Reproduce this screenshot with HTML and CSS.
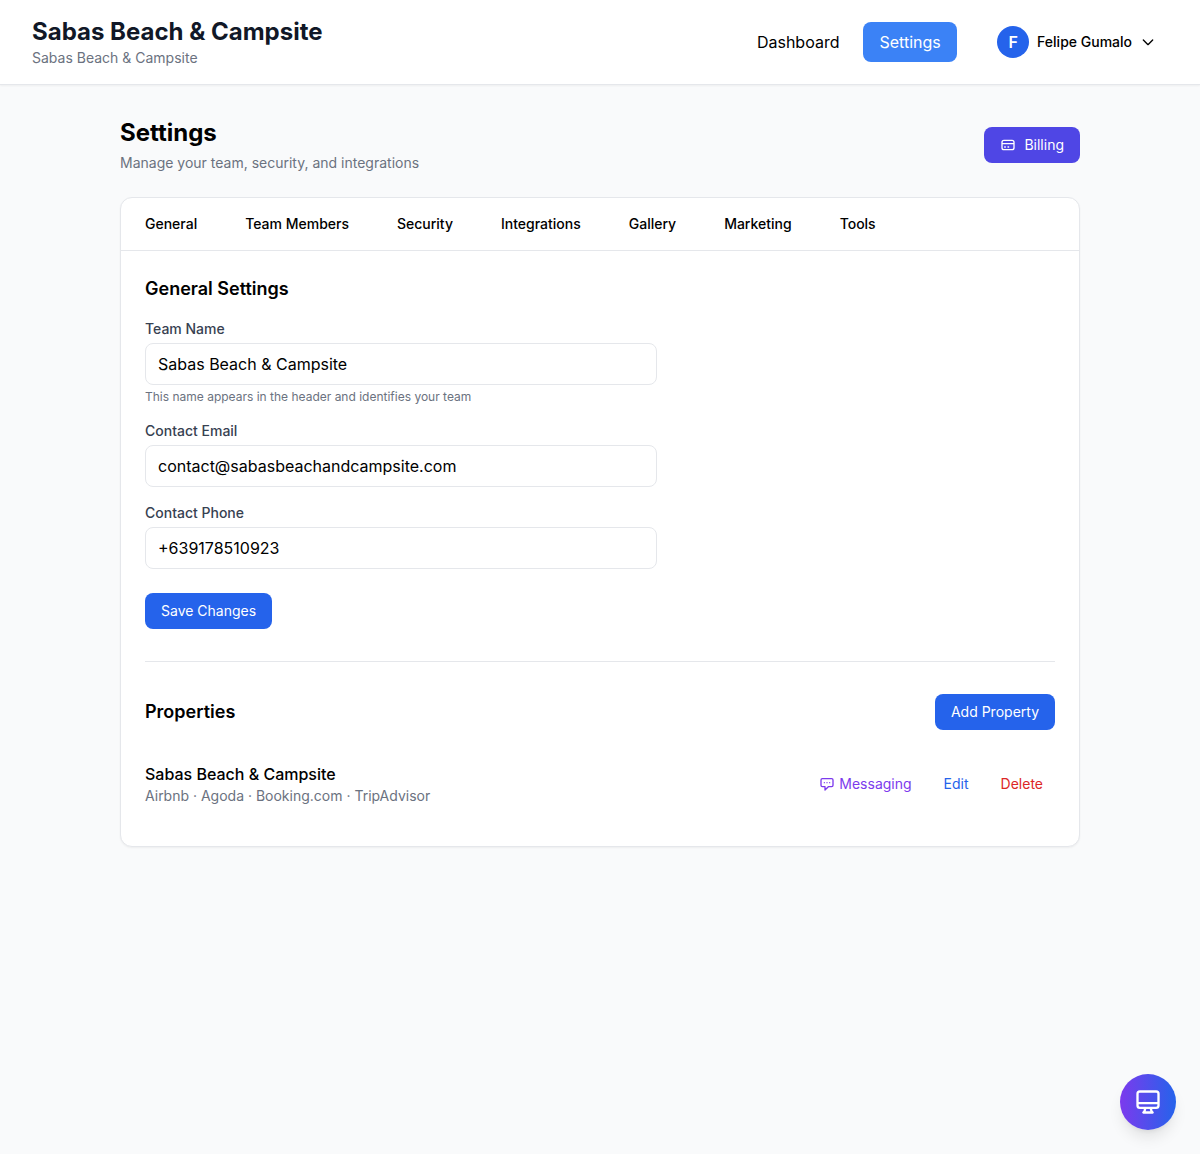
FILE: index.html
```html
<!DOCTYPE html>
<html lang="en">
<head>
    <meta charset="UTF-8">
    <meta name="viewport" content="width=device-width, initial-scale=1.0">
    <title>Settings - Sabas Beach &amp; Campsite</title>
    <link rel="stylesheet" href="styles.css">
</head>
<body>
    <header class="header">
        <div class="brand">
            <h1 class="brand-name">Sabas Beach &amp; Campsite</h1>
            <p class="subtext">Sabas Beach &amp; Campsite</p>
        </div>

        <nav class="nav">
            <a href="#" class="nav-link">Dashboard</a>
            <a href="#" class="nav-link active">Settings</a>
            <button type="button" class="user-menu">
                <span class="avatar">F</span>
                <span>Felipe Gumalo</span>
                <svg class="icon" viewBox="0 0 24 24"><path d="M19 9l-7 7-7-7"/></svg>
            </button>
        </nav>
    </header>

    <main class="container">
        <div class="page-head">
            <div>
                <h2 class="page-title">Settings</h2>
                <p class="subtext">Manage your team, security, and integrations</p>
            </div>
            <button type="button" class="btn btn-billing">
                <svg class="icon" viewBox="0 0 24 24"><path d="M3 10h18M7 15h1m4 0h1m-7 4h12a3 3 0 003-3V8a3 3 0 00-3-3H6a3 3 0 00-3 3v8a3 3 0 003 3z"/></svg>
                Billing
            </button>
        </div>

        <div class="card">
            <div class="tabs">
                <a href="#" class="tab">General</a>
                <a href="#" class="tab">Team Members</a>
                <a href="#" class="tab">Security</a>
                <a href="#" class="tab">Integrations</a>
                <a href="#" class="tab">Gallery</a>
                <a href="#" class="tab">Marketing</a>
                <a href="#" class="tab">Tools</a>
            </div>

            <div class="card-body">
                <h3 class="section-title">General Settings</h3>

                <form class="settings-form">
                    <div class="form-group">
                        <label for="teamName">Team Name</label>
                        <input type="text" id="teamName" value="Sabas Beach &amp; Campsite">
                        <p class="hint">This name appears in the header and identifies your team</p>
                    </div>

                    <div class="form-group">
                        <label for="contactEmail">Contact Email</label>
                        <input type="email" id="contactEmail" value="contact@sabasbeachandcampsite.com">
                    </div>

                    <div class="form-group">
                        <label for="contactPhone">Contact Phone</label>
                        <input type="tel" id="contactPhone" value="+639178510923">
                    </div>

                    <button type="button" class="btn btn-save">Save Changes</button>
                </form>

                <section class="properties">
                    <div class="properties-head">
                        <h3 class="section-title">Properties</h3>
                        <button type="button" class="btn">Add Property</button>
                    </div>

                    <div class="property">
                        <div>
                            <p class="property-name">Sabas Beach &amp; Campsite</p>
                            <p class="subtext">Airbnb · Agoda · Booking.com · TripAdvisor</p>
                        </div>
                        <div class="property-actions">
                            <button type="button" class="action messaging">
                                <svg class="icon" viewBox="0 0 24 24"><path d="M8 10h.01M12 10h.01M16 10h.01M9 16H5a2 2 0 01-2-2V6a2 2 0 012-2h14a2 2 0 012 2v8a2 2 0 01-2 2h-5l-5 5v-5z"/></svg>
                                Messaging
                            </button>
                            <button type="button" class="action edit">Edit</button>
                            <button type="button" class="action delete">Delete</button>
                        </div>
                    </div>
                </section>
            </div>
        </div>
    </main>

    <button type="button" class="fab" aria-label="Open display">
        <svg class="icon" viewBox="0 0 24 24"><path d="M9.75 17L9 20l-1 1h8l-1-1-.75-3M3 13h18M5 17h14a2 2 0 002-2V5a2 2 0 00-2-2H5a2 2 0 00-2 2v10a2 2 0 002 2z"/></svg>
    </button>
</body>
</html>
```
FILE: styles.css
```css
* {
    box-sizing: border-box;
    margin: 0;
    padding: 0;
}
body {
    font-family: Inter, -apple-system, BlinkMacSystemFont, 'Segoe UI', sans-serif;
    font-size: 16px;
    line-height: 24px;
    background: #f9fafb;
    color: #000;
    min-height: 100vh;
    -webkit-font-smoothing: antialiased;
}
a {
    color: inherit;
    text-decoration: none;
}
button {
    font: inherit;
    color: inherit;
    background: none;
    border: none;
    cursor: pointer;
}
.icon {
    width: 16px;
    height: 16px;
    flex-shrink: 0;
    fill: none;
    stroke: currentColor;
    stroke-width: 2;
    stroke-linecap: round;
    stroke-linejoin: round;
}
.subtext {
    font-size: 14px;
    line-height: 20px;
    color: #6b7280;
}

/* Header */
.header {
    display: flex;
    align-items: center;
    justify-content: space-between;
    padding: 16px 32px;
    background: white;
    border-bottom: 1px solid #e5e7eb;
    box-shadow: 0 1px 2px rgba(0,0,0,0.05);
}
.brand-name {
    font-size: 24px;
    line-height: 32px;
    font-weight: 700;
    color: #111827;
}
.nav {
    display: flex;
    align-items: center;
    gap: 8px;
}
.nav-link {
    padding: 8px 16px;
    border-radius: 8px;
}
.nav-link.active {
    background: #3b82f6;
    color: white;
}
.user-menu {
    display: flex;
    align-items: center;
    gap: 8px;
    margin-left: 20.4px;
    padding: 8px 12px;
    font-size: 14px;
    line-height: 20px;
    font-weight: 500;
}
.avatar {
    display: flex;
    align-items: center;
    justify-content: center;
    width: 32px;
    height: 32px;
    border-radius: 50%;
    background: #2563eb;
    color: white;
    font-size: 16px;
    font-weight: 600;
}

/* Page */
.container {
    max-width: 1024px;
    margin: 0 auto;
    padding: 32px;
}
.page-head {
    display: flex;
    align-items: center;
    justify-content: space-between;
    margin-bottom: 24px;
}
.page-title {
    font-size: 24px;
    line-height: 32px;
    font-weight: 700;
    margin-bottom: 4px;
}
.btn {
    padding: 8px 16px;
    background: #2563eb;
    color: white;
    border-radius: 8px;
    font-size: 14px;
    line-height: 20px;
}
.btn:hover {
    background: #1d4ed8;
}
.btn-billing {
    display: flex;
    align-items: center;
    gap: 8px;
    background: #4f46e5;
}
.btn-billing:hover {
    background: #4338ca;
}
.card {
    background: white;
    border: 1px solid #e5e7eb;
    border-radius: 12px;
    box-shadow: 0 1px 2px rgba(0,0,0,0.05);
}
.tabs {
    display: flex;
    gap: 48px;
    padding: 16px 24px;
    border-bottom: 1px solid #e5e7eb;
}
.tab {
    font-size: 14px;
    line-height: 20px;
    font-weight: 500;
}
.card-body {
    padding: 24px;
}
.section-title {
    font-size: 18px;
    line-height: 28px;
    font-weight: 600;
}

/* Form */
.settings-form {
    max-width: 512px;
    margin-top: 16px;
}
.form-group {
    margin-bottom: 16px;
}
label {
    display: block;
    margin-bottom: 4px;
    font-size: 14px;
    line-height: 20px;
    font-weight: 500;
    color: #374151;
}
input {
    display: block;
    width: 100%;
    height: 42px;
    padding: 8px 12px;
    border: 1px solid #e5e7eb;
    border-radius: 8px;
    background: white;
    color: #000;
    font: inherit;
}
input:focus {
    outline: none;
    border-color: #3b82f6;
}
.hint {
    margin-top: 4px;
    font-size: 12px;
    line-height: 16px;
    color: #6b7280;
}
.btn-save {
    display: block;
    margin-top: 24px;
}

/* Properties */
.properties {
    margin-top: 32px;
    padding-top: 32px;
    border-top: 1px solid #e5e7eb;
}
.properties-head {
    display: flex;
    align-items: center;
    justify-content: space-between;
    margin-bottom: 16px;
}
.property {
    display: flex;
    align-items: center;
    justify-content: space-between;
    padding: 16px 0;
}
.property-name {
    font-weight: 500;
}
.property-actions {
    display: flex;
    gap: 8px;
}
.action {
    display: flex;
    align-items: center;
    gap: 4px;
    padding: 4px 12px;
    font-size: 14px;
    line-height: 20px;
}
.messaging {
    color: #7c3aed;
}
.edit {
    color: #2563eb;
}
.delete {
    color: #dc2626;
}

/* Floating button */
.fab {
    position: fixed;
    right: 24px;
    bottom: 24px;
    display: flex;
    align-items: center;
    justify-content: center;
    width: 56px;
    height: 56px;
    border-radius: 50%;
    background: linear-gradient(to right, #7c3aed, #2563eb);
    color: white;
    box-shadow: 0 10px 15px -3px rgba(0,0,0,0.1), 0 4px 6px -4px rgba(0,0,0,0.1);
}
.fab .icon {
    width: 28px;
    height: 28px;
}
```
